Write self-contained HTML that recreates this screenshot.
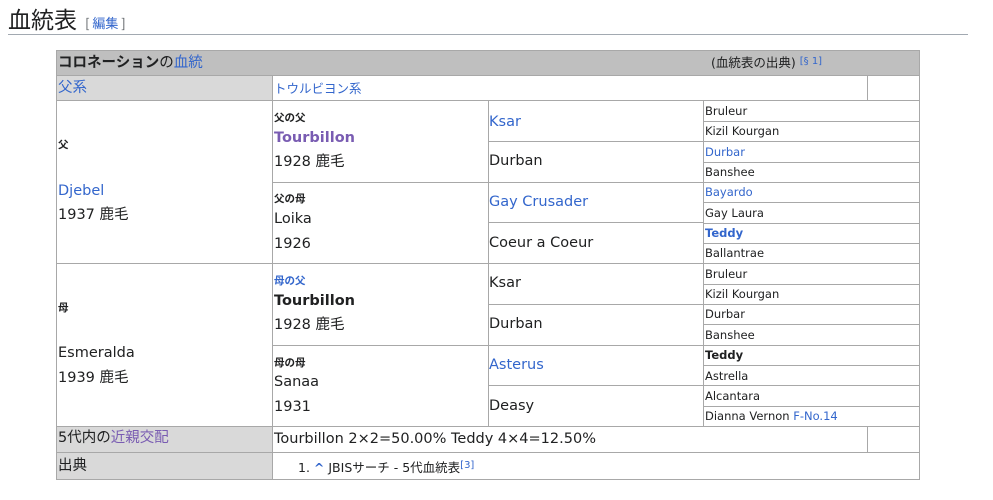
<!DOCTYPE html>
<html><head><meta charset="utf-8"><style>
body{margin:0;background:#fff;width:993px;height:500px;position:relative;overflow:hidden;font-family:"DejaVu Sans","Noto Sans CJK JP",sans-serif;color:#202122}
.c{position:absolute;box-sizing:border-box;border:1px solid #a8a8a8}
.t{position:absolute;white-space:nowrap;line-height:20px;margin-top:1px}
.a{color:#3366cc}.v{color:#795cb2}
.m{font-size:14.5px}.s{font-size:11.5px}.l{font-size:10.5px;font-weight:bold}
.j{font-size:12.5px}
</style></head><body>
<div class="t" style="left:8px;top:2px;font-size:23px;line-height:30px;font-family:'Noto Sans CJK JP',sans-serif">血統表 <span style="font-size:13px;color:#54595d">&nbsp;[ <span class="a">編集</span> ]</span></div>
<div style="position:absolute;left:8px;top:34px;width:960px;height:1px;background:#a2a9b1"></div>

<div class="c" style="left:56px;top:50px;width:864px;height:26px;background:#bfbfbf"></div>
<div class="c" style="left:56px;top:75px;width:217px;height:26px;background:#d9d9d9"></div>
<div class="c" style="left:272px;top:75px;width:596px;height:26px"></div>
<div class="c" style="left:867px;top:75px;width:53px;height:26px"></div>

<div class="c" style="left:56px;top:100px;width:217px;height:164px"></div>
<div class="c" style="left:56px;top:263px;width:217px;height:164px"></div>
<div class="c" style="left:272px;top:100px;width:217px;height:83px"></div>
<div class="c" style="left:272px;top:182px;width:217px;height:82px"></div>
<div class="c" style="left:272px;top:263px;width:217px;height:83px"></div>
<div class="c" style="left:272px;top:345px;width:217px;height:82px"></div>
<div class="c" style="left:488px;top:100px;width:216px;height:42px"></div>
<div class="c" style="left:488px;top:141px;width:216px;height:42px"></div>
<div class="c" style="left:488px;top:182px;width:216px;height:41px"></div>
<div class="c" style="left:488px;top:222px;width:216px;height:42px"></div>
<div class="c" style="left:488px;top:263px;width:216px;height:42px"></div>
<div class="c" style="left:488px;top:304px;width:216px;height:42px"></div>
<div class="c" style="left:488px;top:345px;width:216px;height:41px"></div>
<div class="c" style="left:488px;top:385px;width:216px;height:42px"></div>
<div class="c" style="left:703px;top:100px;width:217px;height:22px"></div>
<div class="c" style="left:703px;top:121px;width:217px;height:21px"></div>
<div class="c" style="left:703px;top:141px;width:217px;height:22px"></div>
<div class="c" style="left:703px;top:162px;width:217px;height:21px"></div>
<div class="c" style="left:703px;top:182px;width:217px;height:21px"></div>
<div class="c" style="left:703px;top:202px;width:217px;height:22px"></div>
<div class="c" style="left:703px;top:223px;width:217px;height:21px"></div>
<div class="c" style="left:703px;top:243px;width:217px;height:21px"></div>
<div class="c" style="left:703px;top:263px;width:217px;height:22px"></div>
<div class="c" style="left:703px;top:284px;width:217px;height:21px"></div>
<div class="c" style="left:703px;top:304px;width:217px;height:21px"></div>
<div class="c" style="left:703px;top:324px;width:217px;height:22px"></div>
<div class="c" style="left:703px;top:345px;width:217px;height:21px"></div>
<div class="c" style="left:703px;top:365px;width:217px;height:21px"></div>
<div class="c" style="left:703px;top:385px;width:217px;height:22px"></div>
<div class="c" style="left:703px;top:406px;width:217px;height:21px"></div>

<div class="c" style="left:56px;top:426px;width:217px;height:27px;background:#d9d9d9"></div>
<div class="c" style="left:272px;top:426px;width:596px;height:27px"></div>
<div class="c" style="left:867px;top:426px;width:53px;height:27px"></div>
<div class="c" style="left:56px;top:452px;width:217px;height:28px;background:#d9d9d9"></div>
<div class="c" style="left:272px;top:452px;width:648px;height:28px"></div>

<div class="t m" style="left:58px;top:52px"><b>コロネーション</b>の<span class="a">血統</span></div>
<div class="t j" style="left:711px;top:51px">(血統表の出典) <span class="a" style="font-size:10px;vertical-align:3px">[§ 1]</span></div>
<div class="t m a" style="left:58px;top:77px">父系</div>
<div class="t j a" style="left:274px;top:78px">トウルビヨン系</div>

<div class="t l" style="left:58px;top:134px">父</div>
<div class="t m a" style="left:58px;top:180px">Djebel</div>
<div class="t m" style="left:58px;top:204px">1937 鹿毛</div>
<div class="t l" style="left:58px;top:297px">母</div>
<div class="t m" style="left:58px;top:342px">Esmeralda</div>
<div class="t m" style="left:58px;top:367px">1939 鹿毛</div>

<div class="t l" style="left:274px;top:107px">父の父</div>
<div class="t m v" style="left:274px;top:127px;font-weight:bold">Tourbillon</div>
<div class="t m" style="left:274px;top:151px">1928 鹿毛</div>
<div class="t l" style="left:274px;top:188px">父の母</div>
<div class="t m" style="left:274px;top:208px">Loika</div>
<div class="t m" style="left:274px;top:233px">1926</div>
<div class="t l a" style="left:274px;top:270px">母の父</div>
<div class="t m" style="left:274px;top:290px;font-weight:bold">Tourbillon</div>
<div class="t m" style="left:274px;top:314px">1928 鹿毛</div>
<div class="t l" style="left:274px;top:352px">母の母</div>
<div class="t m" style="left:274px;top:371px">Sanaa</div>
<div class="t m" style="left:274px;top:396px">1931</div>

<div class="t m a" style="left:489px;top:111px">Ksar</div>
<div class="t m" style="left:489px;top:150px">Durban</div>
<div class="t m a" style="left:489px;top:191px">Gay Crusader</div>
<div class="t m" style="left:489px;top:232px">Coeur a Coeur</div>
<div class="t m" style="left:489px;top:272px">Ksar</div>
<div class="t m" style="left:489px;top:313px">Durban</div>
<div class="t m a" style="left:489px;top:354px">Asterus</div>
<div class="t m" style="left:489px;top:395px">Deasy</div>

<div class="t s" style="left:705px;top:100px">Bruleur</div>
<div class="t s" style="left:705px;top:120px">Kizil Kourgan</div>
<div class="t s a" style="left:705px;top:141px">Durbar</div>
<div class="t s" style="left:705px;top:161px">Banshee</div>
<div class="t s a" style="left:705px;top:181px">Bayardo</div>
<div class="t s" style="left:705px;top:202px">Gay Laura</div>
<div class="t s a" style="left:705px;top:222px;font-weight:bold">Teddy</div>
<div class="t s" style="left:705px;top:242px">Ballantrae</div>
<div class="t s" style="left:705px;top:263px">Bruleur</div>
<div class="t s" style="left:705px;top:283px">Kizil Kourgan</div>
<div class="t s" style="left:705px;top:303px">Durbar</div>
<div class="t s" style="left:705px;top:324px">Banshee</div>
<div class="t s" style="left:705px;top:344px;font-weight:bold">Teddy</div>
<div class="t s" style="left:705px;top:365px">Astrella</div>
<div class="t s" style="left:705px;top:385px">Alcantara</div>
<div class="t s" style="left:705px;top:405px">Dianna Vernon <span class="a">F-No.14</span></div>

<div class="t m" style="left:58px;top:427px">5代内の<span class="v">近親交配</span></div>
<div class="t m" style="left:274px;top:428px">Tourbillon 2×2=50.00% Teddy 4×4=12.50%</div>
<div class="t m" style="left:58px;top:455px">出典</div>
<div class="t j" style="left:298px;top:455px">1. <b class="a">^</b> JBISサーチ - 5代血統表<span class="a" style="font-size:10px;vertical-align:4px">[3]</span></div>
</body></html>
